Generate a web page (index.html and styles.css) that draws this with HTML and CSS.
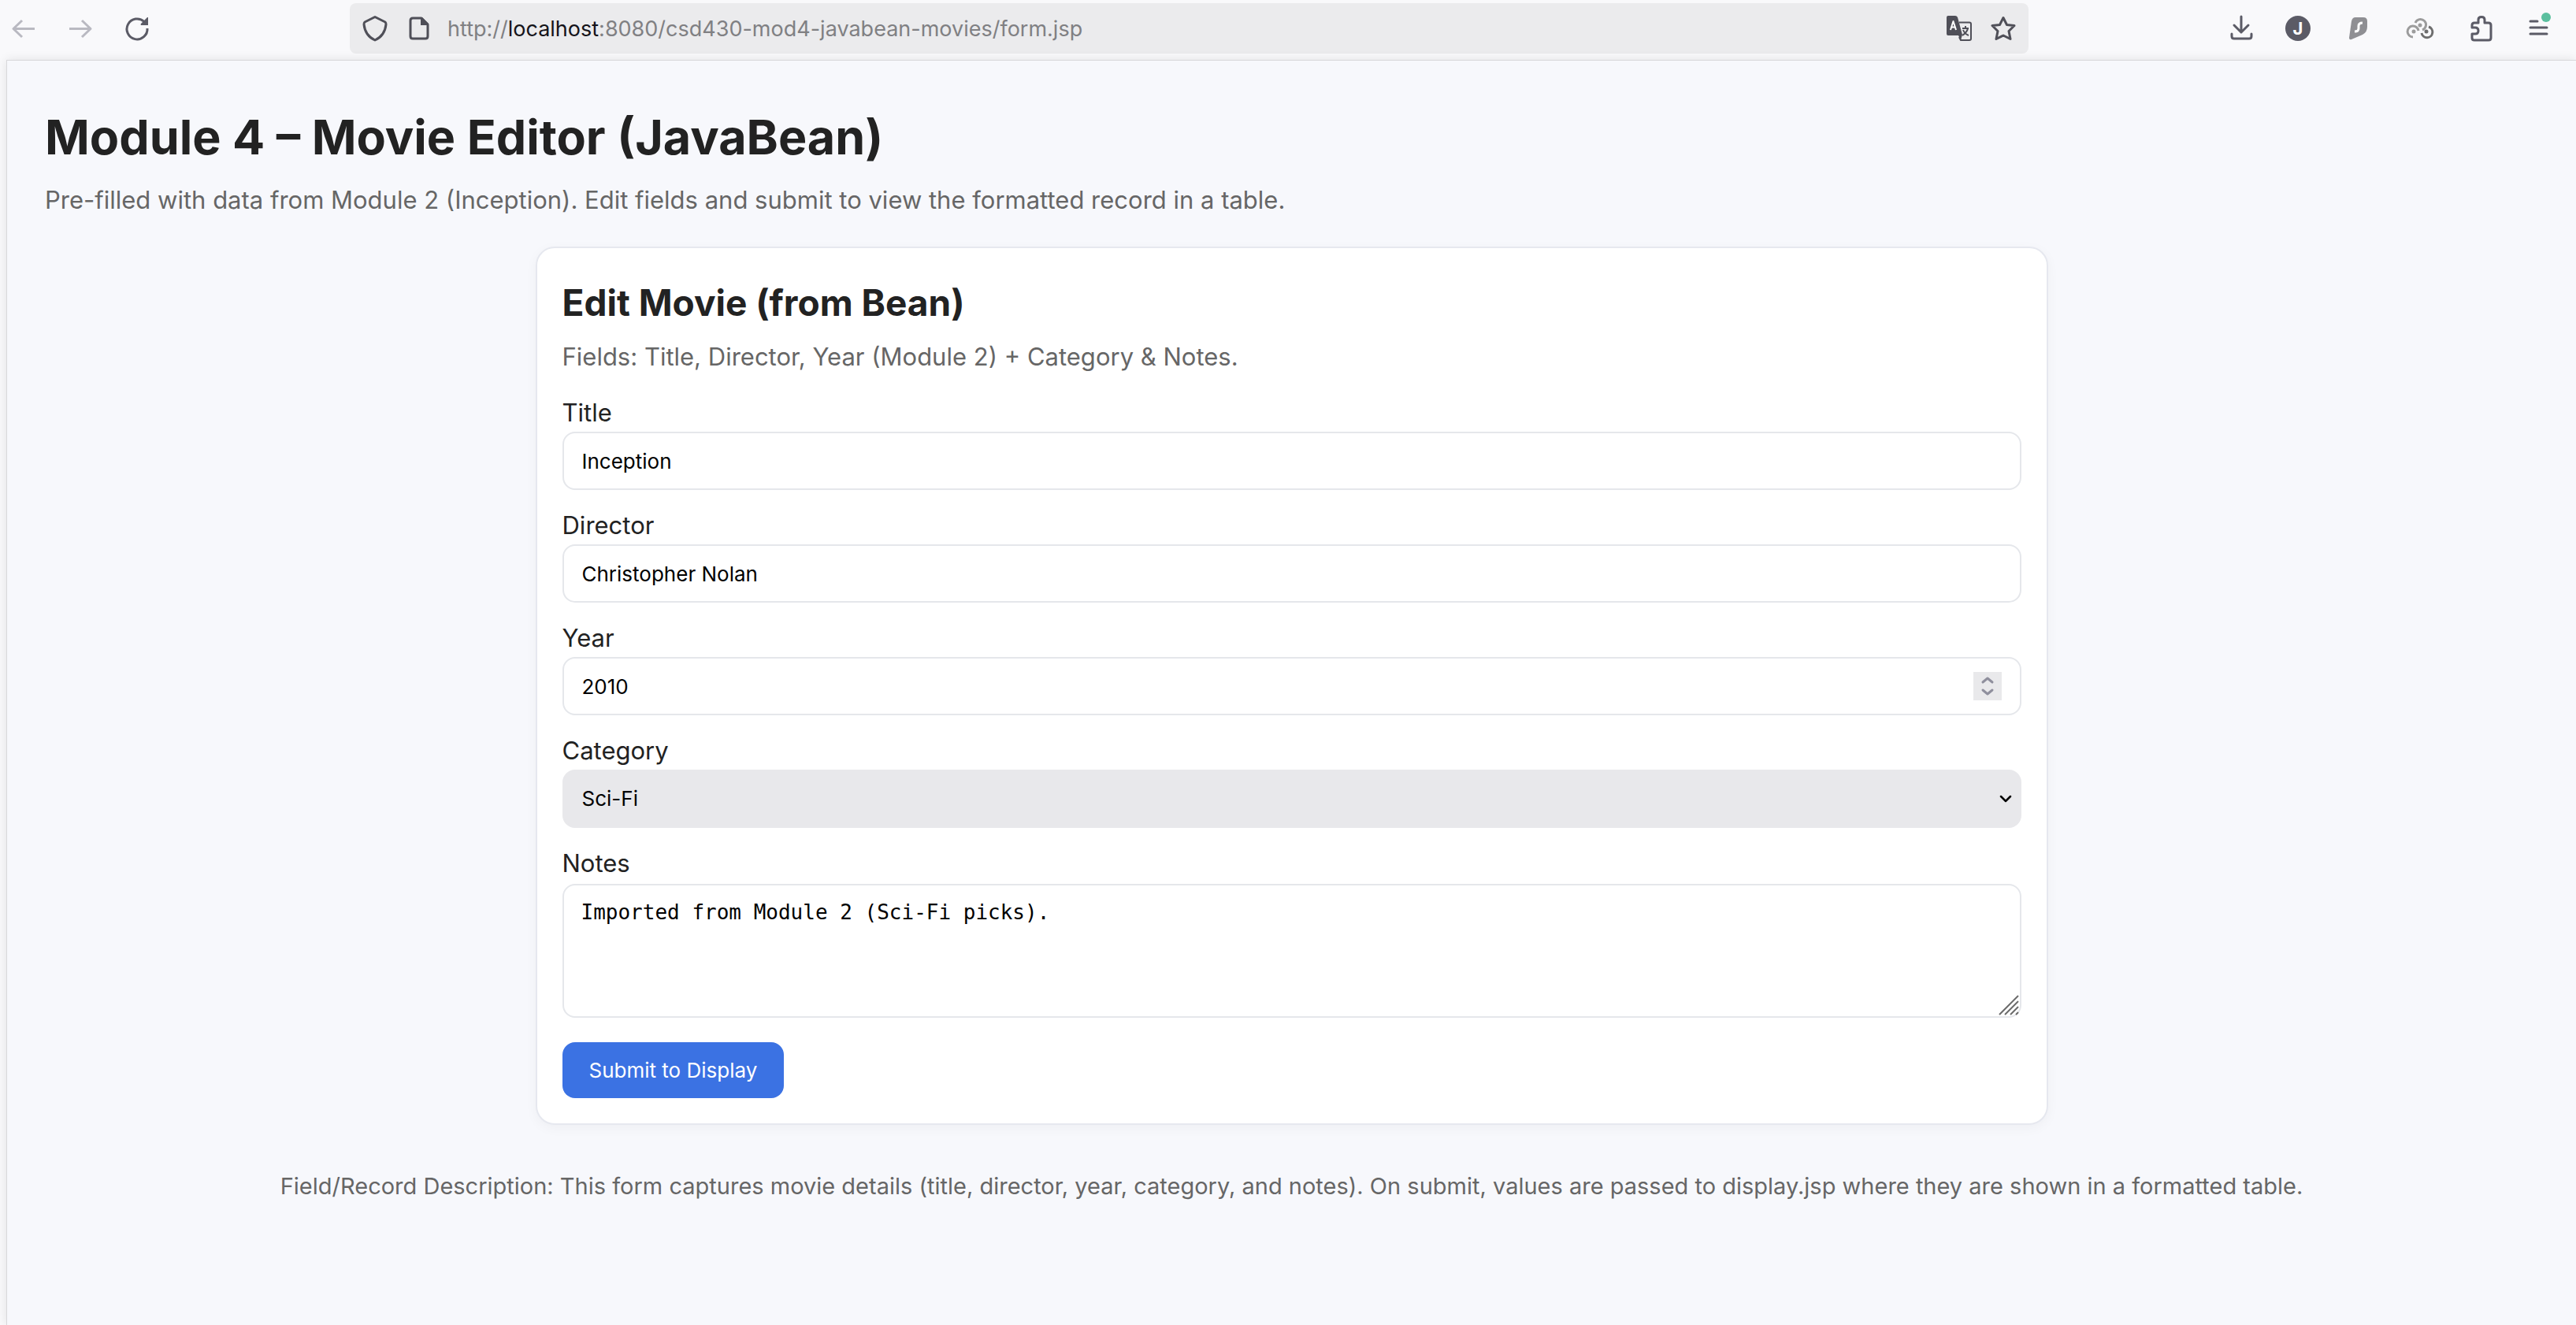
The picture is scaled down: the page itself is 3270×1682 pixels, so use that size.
FILE: index.html
```html
<!DOCTYPE html>
<html lang="en">
<head>
<meta charset="utf-8">
<title>Module 4 – Movie Editor (JavaBean)</title>
<link rel="stylesheet" href="styles.css">
</head>
<body>
<header class="toolbar">
  <nav class="nav-buttons" aria-label="Navigation">
    <button class="icon-button faded" type="button" aria-label="Back"><svg viewBox="0 0 32 32"><path d="M30 16.500H4M14 6L3 16.500L14 27"/></svg></button>
    <button class="icon-button faded" type="button" aria-label="Forward"><svg viewBox="0 0 32 32"><path d="M2 16.500H28M18 6L29 16.500L18 27"/></svg></button>
    <button class="icon-button" type="button" aria-label="Reload"><svg viewBox="0 0 32 32"><path d="M25 7.500A13 13 0 1 0 29 16"/><path class="solid" d="M30 2V12H21Q20 11 21 10L29 2Z"/></svg></button>
  </nav>
  <div class="urlbar">
    <button class="icon-button" type="button" aria-label="Tracking protection"><svg viewBox="0 0 32 32"><path d="M16 1.500L29 8Q30 9 30 11C29 20 25 27 16 31C7 27 3 20 2 11Q2 9 3 8Z"/></svg></button>
    <button class="icon-button" type="button" aria-label="Site information"><svg viewBox="0 0 32 32"><path d="M19 3H8Q5 3 5 6V26Q5 29 8 29H24Q27 29 27 26V11Z"/><path class="solid" d="M18 2H20L28 10V12H18Z"/></svg></button>
    <a class="address" href="#">http://<span class="host">localhost</span>:8080/csd430-mod4-javabean-movies/form.jsp</a>
    <button class="icon-button" type="button" aria-label="Translate page"><svg viewBox="0 0 32 32"><path d="M16 8.500H29Q31 8.500 31 10.500V29Q31 31 29 31H18L16 27" stroke-width="2"/><path d="M20 16H28M24 13V16M27 16Q26 21 20 25M21 18Q23 23 28 25" stroke-width="2"/><path class="solid" d="M2 0H11Q13 0 14 2L20 24L18 31L15 25H2Q0 25 0 23V2Q0 0 2 0Z"/><path class="light" d="M5 18L8.500 7L12 18M6 14.500H11"/></svg></button>
    <button class="icon-button" type="button" aria-label="Bookmark"><svg viewBox="0 0 32 32"><path d="M16 2.500L20.500 11.500L30 12.500L23 19.500L25 29.500L16 25L7 29.500L9 19.500L2 12.500L11.500 11.500Z"/></svg></button>
  </div>
  <div class="tool-buttons">
    <button class="icon-button" type="button" aria-label="Downloads"><svg viewBox="0 0 32 32" stroke-linecap="round"><path d="M16 1V21M7 12L16 21L25 12M4 23V26Q4 29 7 29H26Q29 29 29 26V23"/></svg></button>
    <button class="icon-button avatar" type="button" aria-label="Account">J</button>
    <div class="extensions">
      <button class="icon-button" type="button" aria-label="Surfshark"><svg viewBox="0 0 32 32"><path class="shark" d="M12 2H22Q27 2 27 7V14Q27 21 21 24L7 30Q4 31 4 28L7 7Q8 2 12 2Z"/><path class="light thick" d="M21 9Q16 9 16 13V16Q16 20 11 20"/></svg></button>
      <button class="icon-button rings" type="button" aria-label="Extension"><svg viewBox="0 0 32 32"><path d="M7 27A7 7 0 1 1 14 19"/><path d="M10 9A7 7 0 1 1 19 18"/><path class="dark" d="M27 14A7 7 0 1 1 18 22"/><g class="solid"><circle cx="8" cy="20" r="2.500"/><circle cx="16" cy="12" r="2.500"/><circle class="dark-fill" cx="24" cy="20" r="2.500"/></g></svg></button>
      <button class="icon-button" type="button" aria-label="Extensions"><svg viewBox="0 0 32 32"><path d="M4 15V12Q4 9 7 9H12V5Q12 1.500 16 1.500Q20 1.500 20 5V9H25Q28 9 28 12V28Q28 31 25 31H7Q4 31 4 28V23H8Q12 23 12 19Q12 15 8 15Z"/></svg></button>
    </div>
    <button class="icon-button" type="button" aria-label="Application menu"><svg viewBox="0 0 32 32" stroke-linecap="round"><path d="M6 7H15M6 15H27M6 23H27"/><circle class="dot" cx="26" cy="2" r="6"/></svg></button>
  </div>
</header>
<main class="page">
  <h1>Module 4 – Movie Editor (JavaBean)</h1>
  <p class="muted">Pre-filled with data from Module 2 (Inception). Edit fields and submit to view the formatted record in a table.</p>
  <section class="card">
    <h2>Edit Movie (from Bean)</h2>
    <p class="muted">Fields: Title, Director, Year (Module 2) + Category &amp; Notes.</p>
    <form class="form" action="#">
      <div class="field"><label for="title">Title</label><input class="control" id="title" type="text" value="Inception"></div>
      <div class="field"><label for="director">Director</label><input class="control" id="director" type="text" value="Christopher Nolan"></div>
      <div class="field"><label for="year">Year</label><input class="control" id="year" type="number" value="2010"></div>
      <div class="field"><label for="category">Category</label><select class="control" id="category"><option>Sci-Fi</option></select></div>
      <div class="field notes"><label for="notes">Notes</label><textarea class="control" id="notes">Imported from Module 2 (Sci-Fi picks).</textarea><svg class="grip" viewBox="0 0 26 26" aria-hidden="true"><path d="M1 25L25 1M8 25L25 8M15 25L25 15M22 25L25 22"/></svg></div>
      <button class="submit" type="submit">Submit to Display</button>
    </form>
  </section>
  <footer class="muted footer">Field/Record Description: This form captures movie details (title, director, year, category, and notes). On submit, values are passed to display.jsp where they are shown in a formatted table.</footer>
</main>
</body>
</html>
```
FILE: styles.css
```css
* { box-sizing: border-box; }

body {
  margin: 0;
  min-height: 100vh;
  display: flex;
  flex-direction: column;
  background: #f9f9fb;
  color: #222;
  font-family: Inter, "Liberation Sans", sans-serif;
  font-size: 31px;
  line-height: 48px;
}

h1, h2, p { margin: 0; }

.toolbar {
  display: flex;
  align-items: center;
  padding: 4px 32px 8px 14px;
  color: #5b5b66;
}

.nav-buttons { display: flex; gap: 40px; width: 430px; flex: none; }

.icon-button {
  width: 32px;
  height: 32px;
  padding: 0;
  border: 0;
  background: none;
  color: inherit;
  flex: none;
}
.icon-button svg {
  display: block;
  width: 32px;
  height: 32px;
  overflow: visible;
  fill: none;
  stroke: currentColor;
  stroke-width: 3;
  stroke-linejoin: round;
}
.icon-button .solid { fill: currentColor; stroke: none; }
.icon-button .light { stroke: #fff; stroke-width: 2; }
.icon-button .thick { stroke-width: 3; }
.icon-button .shark { fill: #8f8f93; stroke: none; }
.icon-button .dot { fill: #5bbf9f; stroke: none; }
.icon-button .dark { stroke: #6e6e6e; }
.icon-button .dark-fill { fill: #6e6e6e; }
.faded { color: #b9b9c1; }
.rings { color: #9c9c9c; }

.avatar {
  border-radius: 50%;
  background: #5b5b66;
  color: #fff;
  font: bold 22px/32px Inter, sans-serif;
}

.urlbar {
  display: flex;
  align-items: center;
  gap: 24px;
  flex: 1;
  height: 64px;
  padding: 0 16px;
  border-radius: 8px;
  background: #ebebed;
  color: #4f4f58;
}
.address {
  flex: 1;
  margin-left: -4px;
  padding-top: 2px;
  font-size: 27px;
  line-height: 32px;
  color: #808083;
  text-decoration: none;
}
.host { color: #15141a; }

.tool-buttons { display: flex; gap: 40px; padding-left: 254px; flex: none; }
.extensions { display: flex; gap: 46px; padding-left: 5px; }

.page {
  flex: 1;
  margin-left: 8px;
  padding: 57px 48px;
  border: solid #d8d8db;
  border-width: 1px 0 0 1px;
  background: #f7f8fc;
  box-shadow: 0 0 12px #0000001a;
}

h1 { font-size: 61px; line-height: 80px; margin-bottom: 16px; }
h2 { font-size: 46px; line-height: 62px; margin-bottom: 14px; }
.muted { color: #666; }

.card {
  max-width: 1920px;
  margin: 35px auto 54px;
  padding: 38px 32px 32px;
  border: 2px solid #e6e8ef;
  border-radius: 24px;
  background: #fff;
  box-shadow: 0 4px 16px #0000000a;
}

.form { margin-top: 23px; }
.field { position: relative; display: flex; flex-direction: column; margin-bottom: 21px; }

.control {
  width: 100%;
  height: 74px;
  padding: 0 23px;
  border: 2px solid #e5e7eb;
  border-radius: 16px;
  background: #fff;
  color: #000;
  font: 26px/32px Inter, "Liberation Sans", sans-serif;
}

input[type="number"]::-webkit-inner-spin-button {
  appearance: none;
  width: 36px;
  height: 36px;
  opacity: 1;
  background: #e9e9eb url("data:image/svg+xml,%3Csvg xmlns='http://www.w3.org/2000/svg' viewBox='0 0 36 36' fill='none' stroke='%238f8f9d' stroke-width='3' stroke-linecap='round' stroke-linejoin='round'%3E%3Cpath d='M12 13L18 8L24 13M12 23L18 28L24 23'/%3E%3C/svg%3E");
}

select.control {
  appearance: none;
  border-color: #e8e8eb;
  background: #e8e8eb url("data:image/svg+xml,%3Csvg xmlns='http://www.w3.org/2000/svg' viewBox='0 0 16 12' fill='none' stroke='%23000' stroke-width='2.500' stroke-linecap='round' stroke-linejoin='round'%3E%3Cpath d='M2 3L8 9L14 3'/%3E%3C/svg%3E") right 10px center / 16px 12px no-repeat;
}

textarea.control {
  height: 170px;
  margin-top: 2px;
  padding: 18px 22px;
  font-family: "DejaVu Sans Mono", monospace;
  resize: none;
}
.notes { margin-bottom: 31px; }
.grip {
  position: absolute;
  right: 3px;
  bottom: 3px;
  width: 26px;
  height: 26px;
  stroke: #6b6b6b;
  stroke-width: 2;
  pointer-events: none;
}

.submit {
  display: block;
  height: 71px;
  padding: 0 34px;
  border: 0;
  border-radius: 16px;
  background: #3b72e3;
  color: #fff;
  font: 26px/32px Inter, "Liberation Sans", sans-serif;
}

.footer { text-align: center; font-size: 29px; }
```
